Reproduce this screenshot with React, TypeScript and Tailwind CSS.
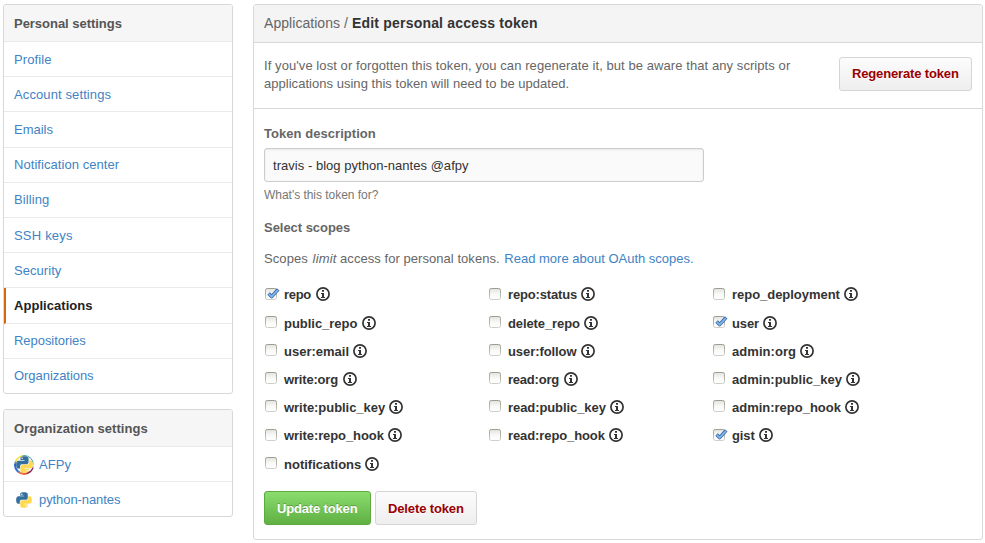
type Item = { label: string; tracking: string };

const settings: (Item & { selected?: boolean })[] = [
  { label: 'Profile', tracking: 'tracking-[0.11px]' },
  { label: 'Account settings', tracking: 'tracking-[0.11px]' },
  { label: 'Emails', tracking: 'tracking-normal' },
  { label: 'Notification center', tracking: 'tracking-[0.06px]' },
  { label: 'Billing', tracking: 'tracking-[0.09px]' },
  { label: 'SSH keys', tracking: 'tracking-[0.2px]' },
  { label: 'Security', tracking: 'tracking-[0.05px]' },
  { label: 'Applications', tracking: 'tracking-[0.05px]', selected: true },
  { label: 'Repositories', tracking: 'tracking-[-0.05px]' },
  { label: 'Organizations', tracking: 'tracking-[-0.05px]' },
];

type Scope = { label: string; width: string; tracking: string; checked?: boolean };

const scopes: Scope[] = [
  { label: 'repo', width: 'w-[32px]', tracking: 'tracking-[-0.3px]', checked: true },
  { label: 'repo:status', width: 'w-[73px]', tracking: 'tracking-[-0.16px]' },
  { label: 'repo_deployment', width: 'w-[112px]', tracking: 'tracking-[-0.03px]' },
  { label: 'public_repo', width: 'w-[78px]', tracking: 'tracking-[-0.03px]' },
  { label: 'delete_repo', width: 'w-[76px]', tracking: 'tracking-[-0.1px]' },
  { label: 'user', width: 'w-[31px]', tracking: 'tracking-[-0.13px]', checked: true },
  { label: 'user:email', width: 'w-[69px]', tracking: 'tracking-normal' },
  { label: 'user:follow', width: 'w-[73px]', tracking: 'tracking-[-0.08px]' },
  { label: 'admin:org', width: 'w-[68px]', tracking: 'tracking-[0.05px]' },
  { label: 'write:org', width: 'w-[59px]', tracking: 'tracking-[-0.18px]' },
  { label: 'read:org', width: 'w-[56px]', tracking: 'tracking-[-0.22px]' },
  { label: 'admin:public_key', width: 'w-[114px]', tracking: 'tracking-[0.01px]' },
  { label: 'write:public_key', width: 'w-[105px]', tracking: 'tracking-[-0.05px]' },
  { label: 'read:public_key', width: 'w-[102px]', tracking: 'tracking-[-0.08px]' },
  { label: 'admin:repo_hook', width: 'w-[113px]', tracking: 'tracking-[-0.01px]' },
  { label: 'write:repo_hook', width: 'w-[104px]', tracking: 'tracking-[-0.09px]' },
  { label: 'read:repo_hook', width: 'w-[101px]', tracking: 'tracking-[-0.1px]' },
  { label: 'gist', width: 'w-[27px]', tracking: 'tracking-[-0.09px]', checked: true },
  { label: 'notifications', width: 'w-[81px]', tracking: 'tracking-normal' },
];

function InfoIcon() {
  return (
    <svg viewBox="0 0 14 14" className="mt-[2.4px] h-[14px] w-[14px] shrink-0" fill="none">
      <circle cx="7" cy="7" r="6.1" stroke="#333" strokeWidth="1.7" />
      <path d="M6 3h2v1.8H6zM5 6h3v4h1v1H5v-1h1V7H5z" fill="#333" />
    </svg>
  );
}

function Checkbox({ checked }: { checked?: boolean }) {
  return (
    <svg viewBox="0 0 16 14" className="mt-[1.6px] h-[14px] w-[16px] shrink-0">
      <defs>
        <linearGradient id="box-fill" x1="0" y1="0" x2="0" y2="1">
          <stop offset="0" stopColor="#e2e2de" />
          <stop offset="0.5" stopColor="#f8f8f7" />
          <stop offset="1" stopColor="#ffffff" />
        </linearGradient>
        <linearGradient id="box-line" x1="0" y1="0" x2="0" y2="1">
          <stop offset="0" stopColor="#9a9d92" />
          <stop offset="1" stopColor="#ced0c8" />
        </linearGradient>
      </defs>
      <rect x="0.5" y="1.5" width="11" height="11" rx="1.8" fill="url(#box-fill)" stroke="url(#box-line)" />
      {checked && (
        <>
          <path d="M3.6 6.6l3 3L13.2 2.4" fill="none" stroke="#3465a4" strokeWidth="3.5" strokeLinejoin="round" />
          <path d="M3.9 6.9l2.7 2.7L12.9 2.8" fill="none" stroke="#82b6ee" strokeWidth="1.8" />
        </>
      )}
    </svg>
  );
}

function PythonMark({ className }: { className: string }) {
  return (
    <svg viewBox="0 0 110 110" className={className}>
      <path
        fill="#346f9f"
        d="M54 2c-27 0-25 12-25 12v12h26v4H19S1 28 1 55s15 26 15 26h10V68s-1-15 15-15h26s14 0 14-14V16S83 2 54 2zM40 10a5 5 0 110 10 5 5 0 010-10z"
      />
      <path
        fill="#ffd94f"
        d="M56 108c27 0 25-12 25-12V84H55v-4h36s18 2 18-25-15-26-15-26H84v13s1 15-15 15H43s-14 0-14 14v23s-2 14 27 14zM70 100a5 5 0 110-10 5 5 0 010 10z"
      />
    </svg>
  );
}

function AfpyLogo() {
  return (
    <span className="flex h-5 w-5 items-center justify-center rounded-full bg-[conic-gradient(#35a58c_0deg,#2a9d9d_70deg,#f4f4f4_95deg,#7b2462_110deg,#8b2050_145deg,#f06030_175deg,#f08040_205deg,#3578d8_225deg,#2a5fc0_275deg,#f0e040_300deg,#f5e52a_345deg,#35a58c_360deg)]">
      <span className="flex h-[17px] w-[17px] items-center justify-center rounded-full bg-[#f3f4ee]">
        <PythonMark className="h-[17px] w-[17px]" />
      </span>
    </span>
  );
}

const panel = 'rounded-[3px] border border-[#d8d8d8] bg-white';
const menuHeading = 'h-[37px] border-b border-[#eaeaea] bg-[#f6f6f6] rounded-t-[2px] pl-[10px] font-bold leading-[37px] text-[#555]';
const greyButton =
  'h-[34px] rounded-[3px] border border-[#d5d5d5] bg-linear-to-b from-[#fcfcfc] to-[#eee] text-left font-bold leading-[32px] text-[#900] pl-[12px] whitespace-nowrap [text-shadow:0_1px_0_rgba(255,255,255,0.9)]';

export default function App() {
  return (
    <div className="flex h-[543px] w-[985px] items-start gap-5 overflow-hidden bg-white pl-[3px] pt-1 font-['Liberation_Sans',Arial,sans-serif] text-[13px] text-[#666]">
      <aside className="flex w-[230px] shrink-0 flex-col gap-[15px]">
        <nav className={`${panel} h-[390px]`}>
          <h3 className={`${menuHeading} tracking-[-0.03px]`}>Personal settings</h3>
          {settings.map((item) => (
            <a
              key={item.label}
              className={`block h-[35.2px] border-b border-[#eaeaea] pt-[0.6px] leading-[33px] last:h-[34.2px] last:border-b-0 ${item.tracking} ${
                item.selected ? 'border-l-2 border-l-[#d26911] pl-2 font-bold text-[#222]' : 'pl-[10px] text-[#4183c4]'
              }`}
            >
              {item.label}
            </a>
          ))}
        </nav>
        <nav className={`${panel} h-[108px]`}>
          <h3 className={`${menuHeading} tracking-[0.04px]`}>Organization settings</h3>
          <a className="flex h-[35px] items-center gap-[5px] border-b border-[#eaeaea] pl-[10px] tracking-[0.07px] text-[#4183c4]">
            <span className="pt-px">
              <AfpyLogo />
            </span>
            <span className="pt-[2px]">AFPy</span>
          </a>
          <a className="flex h-[34px] items-center gap-[5px] pl-[10px] tracking-[-0.08px] text-[#4183c4]">
            <span className="flex h-5 w-5 items-center justify-center">
              <PythonMark className="mt-px h-4 w-4" />
            </span>
            <span className="pt-[2px]">python-nantes</span>
          </a>
        </nav>
      </aside>

      <main className={`${panel} h-[536px] w-[730px] shrink-0`}>
        <h1 className="h-[38px] rounded-t-[2px] border-b border-[#d8d8d8] bg-[#f4f4f4] pl-[10px] text-[14px] leading-[37px] text-[#666]">
          <span className="tracking-[0.05px]">Applications / </span>
          <strong className="tracking-[0.2px] text-[#333]">Edit personal access token</strong>
        </h1>

        <section className="flex h-[66px] justify-between border-b border-[#d8d8d8] pl-[10px] pr-[10px] pt-[14px]">
          <p className="whitespace-nowrap leading-[18px]">
            <span className="tracking-[0.075px]">If you've lost or forgotten this token, you can regenerate it, but be aware that any scripts or</span>
            <br />
            <span className="tracking-[0.03px]">applications using this token will need to be updated.</span>
          </p>
          <button className={`${greyButton} w-[133px] tracking-[-0.15px]`}>Regenerate token</button>
        </section>

        <form className="pl-[10px] pt-[15px]">
          <label className="block h-[24px] font-bold leading-5 tracking-[0.05px]">Token description</label>
          <input
            defaultValue="travis - blog python-nantes @afpy"
            className="block h-[34px] w-[440px] rounded-[3px] border border-[#ccc] bg-[#fafafa] px-2 tracking-[0.03px] text-[#333] shadow-[inset_0_1px_2px_rgba(0,0,0,0.075)] outline-none"
          />
          <p className="h-[36px] pt-[3px] text-[12px] leading-5 tracking-[-0.03px] text-[#777]">What's this token for?</p>
          <h4 className="h-[31px] font-bold leading-5 tracking-[-0.04px]">Select scopes</h4>
          <p className="h-[36px] whitespace-nowrap leading-5">
            <span className="tracking-[0.1px]">Scopes</span> <em className="ml-px tracking-[0.15px]">limit</em>{' '}
            <span className="tracking-[0.05px]">access for personal tokens.</span>{' '}
            <a className="ml-px text-[#4183c4]">Read more about OAuth scopes.</a>
          </p>

          <ul className="grid h-[206px] auto-rows-[28.2px] grid-cols-[224px_224px_224px] pl-px">
            {scopes.map((scope) => (
              <li key={scope.label} className="flex items-start">
                <Checkbox checked={scope.checked} />
                <span className={`ml-[3px] mt-[0.4px] whitespace-nowrap font-bold leading-5 text-[#333] ${scope.width} ${scope.tracking}`}>{scope.label}</span>
                <InfoIcon />
              </li>
            ))}
          </ul>

          <div className="flex gap-1">
            <button
              type="button"
              className="h-[34px] w-[107px] whitespace-nowrap rounded-[3px] border border-[#5ca941] bg-linear-to-b from-[#8add6d] to-[#60b044] pl-[12px] pt-px text-left font-bold leading-[32px] tracking-[-0.16px] text-white [text-shadow:0_-1px_0_rgba(0,0,0,0.25)]"
            >
              Update token
            </button>
            <button type="button" className={`${greyButton} w-[102px] pt-px tracking-[-0.13px]`}>
              Delete token
            </button>
          </div>
        </form>
      </main>
    </div>
  );
}
